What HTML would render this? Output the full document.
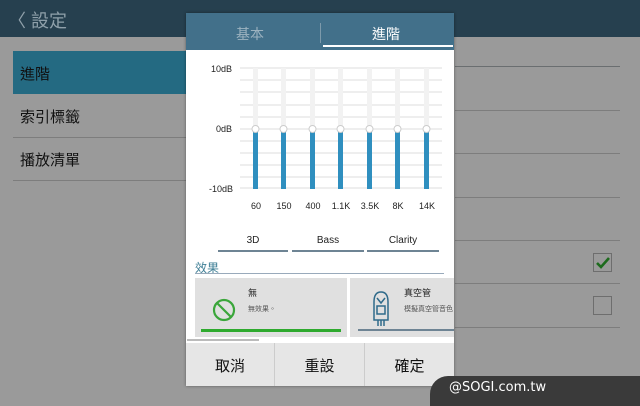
<!DOCTYPE html>
<html><head><meta charset="utf-8"><style>
*{margin:0;padding:0;box-sizing:border-box}
body{width:640px;height:400px;overflow:hidden;background:#9a9a9a;position:relative;font-family:"Liberation Sans","Noto Sans CJK TC",sans-serif}
.a{position:absolute}
.line{position:absolute;height:1px;background:#7d7d7d}
</style></head><body>
<div class="a" style="left:0;top:0;width:640px;height:37px;background:#26404f"></div>
<div class="a" style="left:8px;top:7px;color:#8fa0aa;font-size:18px">〈 設定</div>
<div class="a" style="left:13px;top:51px;width:173px;height:43px;background:#246a82"></div>
<div class="a" style="left:20px;top:63px;font-size:15px;color:#111">進階</div>
<div class="a" style="left:20px;top:106px;font-size:15px;color:#111">索引標籤</div>
<div class="a" style="left:20px;top:149px;font-size:15px;color:#111">播放清單</div>
<div class="line" style="left:13px;top:137px;width:173px"></div>
<div class="line" style="left:13px;top:180px;width:173px"></div>
<div class="line" style="left:455px;top:66px;width:165px;background:#6a6e70"></div>
<div class="line" style="left:455px;top:110px;width:165px"></div>
<div class="line" style="left:455px;top:153px;width:165px"></div>
<div class="line" style="left:455px;top:197px;width:165px"></div>
<div class="line" style="left:455px;top:240px;width:165px"></div>
<div class="line" style="left:455px;top:283px;width:165px"></div>
<div class="line" style="left:455px;top:327px;width:165px"></div>
<div class="a" style="left:593px;top:253px;width:19px;height:19px;border:1.5px solid #6e6e6e"></div>
<svg class="a" style="left:594px;top:254px" width="18" height="18"><path d="M3 9 L7 13 L15 4" stroke="#1d6b1d" stroke-width="2.6" fill="none"/></svg>
<div class="a" style="left:593px;top:296px;width:19px;height:19px;border:1.5px solid #6e6e6e"></div>

<!-- dialog -->
<div class="a" style="left:186px;top:13px;width:268px;height:373px;background:#fff;box-shadow:0 0 3px rgba(0,0,0,.4)">
 <div class="a" style="left:0;top:0;width:268px;height:37px;background:#42708a"></div>
 <div class="a" style="left:50px;top:11px;font-size:14px;color:#9db3c0">基本</div>
 <div class="a" style="left:134px;top:10px;width:1px;height:20px;background:#7d9aab"></div>
 <div class="a" style="left:186px;top:11px;font-size:14px;color:#fff">進階</div>
 <div class="a" style="left:137px;top:32px;width:130px;height:2px;background:#fff"></div>
</div>
<svg class="a" style="left:186px;top:50px" width="268" height="170" font-family="Liberation Sans" font-size="9" fill="#222">
 <g stroke="#ddd" stroke-width="1">
  <line x1="54" y1="18" x2="256" y2="18"/><line x1="54" y1="30" x2="256" y2="30"/><line x1="54" y1="42" x2="256" y2="42"/><line x1="54" y1="55" x2="256" y2="55"/><line x1="54" y1="67" x2="256" y2="67"/><line x1="54" y1="79" x2="256" y2="79"/><line x1="54" y1="91" x2="256" y2="91"/><line x1="54" y1="103" x2="256" y2="103"/><line x1="54" y1="115" x2="256" y2="115"/><line x1="54" y1="127" x2="256" y2="127"/><line x1="54" y1="138" x2="256" y2="138"/>
 </g>
 <text x="25" y="22">10dB</text><text x="30" y="82">0dB</text><text x="23" y="142">-10dB</text>
 <g id="s">
 </g>
 <g fill="#f2f2f2"><rect x="67" y="18" width="5" height="60"/><rect x="95" y="18" width="5" height="60"/><rect x="124" y="18" width="5" height="60"/><rect x="152" y="18" width="5" height="60"/><rect x="181" y="18" width="5" height="60"/><rect x="209" y="18" width="5" height="60"/><rect x="238" y="18" width="5" height="60"/></g>
 <g fill="#2f8fbf"><rect x="67" y="79" width="5" height="60"/><rect x="95" y="79" width="5" height="60"/><rect x="124" y="79" width="5" height="60"/><rect x="152" y="79" width="5" height="60"/><rect x="181" y="79" width="5" height="60"/><rect x="209" y="79" width="5" height="60"/><rect x="238" y="79" width="5" height="60"/></g>
 <g fill="#fff" stroke="#ccc"><circle cx="69.5" cy="79" r="3.5"/><circle cx="97.5" cy="79" r="3.5"/><circle cx="126.5" cy="79" r="3.5"/><circle cx="154.5" cy="79" r="3.5"/><circle cx="183.5" cy="79" r="3.5"/><circle cx="211.5" cy="79" r="3.5"/><circle cx="240.5" cy="79" r="3.5"/></g>
 <g text-anchor="middle"><text x="70" y="159">60</text><text x="98" y="159">150</text><text x="127" y="159">400</text><text x="155" y="159">1.1K</text><text x="184" y="159">3.5K</text><text x="212" y="159">8K</text><text x="241" y="159">14K</text></g>
</svg>
<div class="a" style="left:218px;top:235px;width:70px;text-align:center;font-size:10px;color:#222">3D</div>
<div class="a" style="left:292px;top:235px;width:72px;text-align:center;font-size:10px;color:#222">Bass</div>
<div class="a" style="left:367px;top:235px;width:72px;text-align:center;font-size:10px;color:#222">Clarity</div>
<div class="a" style="left:218px;top:250px;width:70px;height:2px;background:#6e8494"></div>
<div class="a" style="left:292px;top:250px;width:72px;height:2px;background:#6e8494"></div>
<div class="a" style="left:367px;top:250px;width:72px;height:2px;background:#6e8494"></div>
<div class="a" style="left:195px;top:259px;font-size:12px;color:#3f7f96">效果</div>
<div class="a" style="left:195px;top:273px;width:249px;height:1px;background:#9ab"></div>
<div class="a" style="left:195px;top:278px;width:152px;height:59px;background:#e0e0e0"></div>
<div class="a" style="left:350px;top:278px;width:104px;height:59px;background:#e0e0e0"></div>
<svg class="a" style="left:212px;top:298px" width="24" height="24"><circle cx="12" cy="12" r="10" stroke="#3aa63a" stroke-width="2.2" fill="none"/><line x1="5" y1="5" x2="19" y2="19" stroke="#3aa63a" stroke-width="2.2"/></svg>
<div class="a" style="left:248px;top:286px;font-size:9px;color:#222">無</div>
<div class="a" style="left:248px;top:304px;font-size:7px;color:#555">無效果。</div>
<div class="a" style="left:201px;top:329px;width:140px;height:3px;background:#2eaa2e"></div>
<svg class="a" style="left:370px;top:290px" width="22" height="38" stroke="#2f6a8a" fill="none" stroke-width="1.5"><path d="M4 12 Q4 2 11 2 Q18 2 18 12 V30 H4 Z"/><rect x="7" y="16" width="8" height="8"/><path d="M8 30 V36 M11 30 V36 M14 30 V36 M7 8 L11 13 L15 8"/></svg>
<div class="a" style="left:404px;top:286px;font-size:9px;color:#222">真空管</div>
<div class="a" style="left:404px;top:304px;font-size:7px;color:#555;white-space:nowrap;width:50px;overflow:hidden">模擬真空管音色</div>
<div class="a" style="left:358px;top:329px;width:96px;height:2px;background:#6e8494"></div>
<div class="a" style="left:187px;top:339px;width:72px;height:2px;background:#bbb"></div>
<div class="a" style="left:186px;top:343px;width:268px;height:43px;background:#e6e6e6"></div>
<div class="a" style="left:274px;top:343px;width:1px;height:43px;background:#ccc"></div>
<div class="a" style="left:364px;top:343px;width:1px;height:43px;background:#ccc"></div>
<div class="a" style="left:186px;top:355px;width:88px;text-align:center;font-size:15px;color:#111">取消</div>
<div class="a" style="left:275px;top:355px;width:89px;text-align:center;font-size:15px;color:#111">重設</div>
<div class="a" style="left:365px;top:355px;width:89px;text-align:center;font-size:15px;color:#111">確定</div>
<div class="a" style="left:430px;top:376px;width:220px;height:30px;background:#3a3a3a;border-radius:18px 0 0 0"></div>
<div class="a" style="left:449px;top:380px;font-family:'DejaVu Sans',sans-serif;font-size:13px;color:#fff">@SOGI.com.tw</div>
</body></html>
